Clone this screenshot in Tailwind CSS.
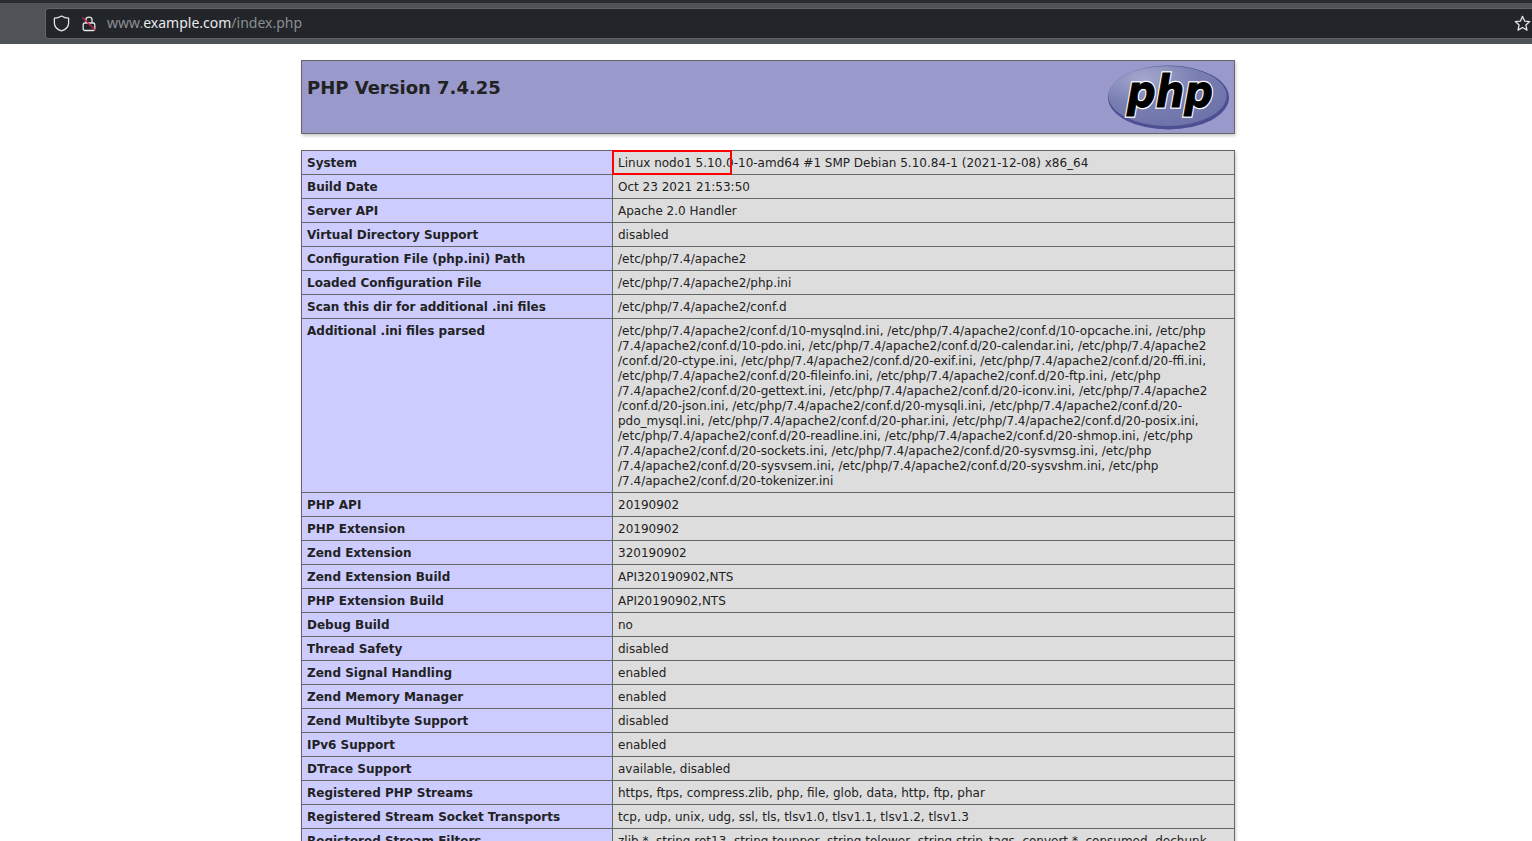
<!DOCTYPE html>
<html>
<head>
<title>phpinfo()</title>
<script src="https://cdn.jsdelivr.net/npm/@tailwindcss/browser@4"></script>
</head>
<body class="bg-white text-[#222] font-['DejaVu_Sans',sans-serif] h-[841px] overflow-hidden">
    <!-- browser toolbar -->
    <div class="h-[44px] bg-[#4f5256] border-t-[3px] border-[#2a2c2f] pt-[5px]">
        <div class="ml-[45px] h-[31px] bg-[#22262a] rounded-l-[3px] border border-[#5f6266] border-r-0 flex items-center">
            <svg class="ml-[7px]" width="17" height="17" viewBox="0 0 16 16" fill="none" stroke="#e4e5e6" stroke-width="1.2"><path d="M8 1 C10 2.3 12.5 3 14.7 3 V7.5 C14.7 11 11.8 13.8 8 15 C4.2 13.8 1.3 11 1.3 7.5 V3 C3.5 3 6 2.3 8 1 Z" stroke-linejoin="round"/></svg>
            <svg class="ml-[11px]" width="16" height="17" viewBox="0 0 16 17" fill="none" stroke="#e4e5e6" stroke-width="1.3"><path d="M5 8 V4.5 C5 1.2 11 1.2 11 4.5 V8"/><rect x="2.2" y="8" width="11.6" height="7.5" rx="1.5"/><path d="M1.5 2.5 L14.5 15.5" stroke="#d0264c" stroke-width="1.3"/></svg>
            <div class="ml-[10px] -mt-[1px] text-[14px] font-['Noto_Sans',sans-serif] text-[#8b8e92] leading-none">www.<span class="text-[#e8e9ea]">example.com</span>/index.php</div>
            <svg class="ml-auto mr-[1px]" width="17" height="17" viewBox="0 0 16 16" fill="none" stroke="#e4e5e6" stroke-width="1.2"><path d="M8 1.3 L10 5.7 L14.8 6.2 L11.2 9.4 L12.2 14.2 L8 11.7 L3.8 14.2 L4.8 9.4 L1.2 6.2 L6 5.7 Z" stroke-linejoin="round"/></svg>
        </div>
    </div>

    <div class="w-[934px] ml-[301px] mt-[16px]">
        <!-- php header -->
        <div class="relative h-[74px] bg-[#9999cc] border border-[#666] shadow-[1px_2px_3px_#ccc] px-[5px] pt-[4px]">
            <h1 class="text-[18px] font-bold leading-[45px] h-[45px]">PHP Version 7.4.25</h1>
            <svg class="absolute right-[5px] top-[4px] w-[121px] h-[65px]" width="121" height="65" viewBox="0 0 121 65">
                <defs>
                    <radialGradient id="logoFill" cx="0.3" cy="0.2" r="0.9">
                        <stop offset="0" stop-color="#a4a8cf"/>
                        <stop offset="0.5" stop-color="#7a7fb2"/>
                        <stop offset="1" stop-color="#6b70a8"/>
                    </radialGradient>
                    <text id="logoWord" x="19" y="42" font-family="DejaVu Sans" font-weight="700" font-style="italic" font-size="44" textLength="86" lengthAdjust="spacingAndGlyphs">php</text>
                </defs>
                <ellipse cx="60.5" cy="32.5" rx="60.5" ry="32" fill="#4c4f91"/>
                <ellipse cx="59.5" cy="31" rx="59" ry="30" fill="url(#logoFill)"/>
                <use href="#logoWord" fill="#fff" stroke="#fff" stroke-width="3.5"/>
                <use href="#logoWord" fill="#000" stroke="#000" stroke-width="1"/>
            </svg>
        </div>

        <!-- first info table -->
        <table class="w-[934px] mt-[16px] border-collapse table-fixed text-[12px] leading-[15px] shadow-[1px_2px_3px_#ccc]">
            <colgroup><col class="w-[311px]"><col></colgroup>
            <tbody id="rows">
                <tr><td class="bg-[#ccccff] border border-[#666] px-[5px] pt-[5px] pb-[3px] align-baseline font-bold">System</td><td class="bg-[#dddddd] border border-[#666] px-[5px] pt-[5px] pb-[3px] align-baseline break-words">Linux nodo1 5.10.0-10-amd64 #1 SMP Debian 5.10.84-1 (2021-12-08) x86_64</td></tr>
                <tr><td class="bg-[#ccccff] border border-[#666] px-[5px] pt-[5px] pb-[3px] align-baseline font-bold">Build Date</td><td class="bg-[#dddddd] border border-[#666] px-[5px] pt-[5px] pb-[3px] align-baseline break-words">Oct 23 2021 21:53:50</td></tr>
                <tr><td class="bg-[#ccccff] border border-[#666] px-[5px] pt-[5px] pb-[3px] align-baseline font-bold">Server API</td><td class="bg-[#dddddd] border border-[#666] px-[5px] pt-[5px] pb-[3px] align-baseline break-words">Apache 2.0 Handler</td></tr>
                <tr><td class="bg-[#ccccff] border border-[#666] px-[5px] pt-[5px] pb-[3px] align-baseline font-bold">Virtual Directory Support</td><td class="bg-[#dddddd] border border-[#666] px-[5px] pt-[5px] pb-[3px] align-baseline break-words">disabled</td></tr>
                <tr><td class="bg-[#ccccff] border border-[#666] px-[5px] pt-[5px] pb-[3px] align-baseline font-bold">Configuration File (php.ini) Path</td><td class="bg-[#dddddd] border border-[#666] px-[5px] pt-[5px] pb-[3px] align-baseline break-words">/etc/php/7.4/apache2</td></tr>
                <tr><td class="bg-[#ccccff] border border-[#666] px-[5px] pt-[5px] pb-[3px] align-baseline font-bold">Loaded Configuration File</td><td class="bg-[#dddddd] border border-[#666] px-[5px] pt-[5px] pb-[3px] align-baseline break-words">/etc/php/7.4/apache2/php.ini</td></tr>
                <tr><td class="bg-[#ccccff] border border-[#666] px-[5px] pt-[5px] pb-[3px] align-baseline font-bold">Scan this dir for additional .ini files</td><td class="bg-[#dddddd] border border-[#666] px-[5px] pt-[5px] pb-[3px] align-baseline break-words">/etc/php/7.4/apache2/conf.d</td></tr>
                <tr><td class="bg-[#ccccff] border border-[#666] px-[5px] pt-[5px] pb-[3px] align-baseline font-bold">Additional .ini files parsed</td><td class="bg-[#dddddd] border border-[#666] px-[5px] pt-[5px] pb-[3px] align-baseline break-words">/etc/php/7.4/apache2/conf.d/10-mysqlnd.ini, /etc/php/7.4/apache2/conf.d/10-opcache.ini, /etc/php<br>/7.4/apache2/conf.d/10-pdo.ini, /etc/php/7.4/apache2/conf.d/20-calendar.ini, /etc/php/7.4/apache2<br>/conf.d/20-ctype.ini, /etc/php/7.4/apache2/conf.d/20-exif.ini, /etc/php/7.4/apache2/conf.d/20-ffi.ini,<br>/etc/php/7.4/apache2/conf.d/20-fileinfo.ini, /etc/php/7.4/apache2/conf.d/20-ftp.ini, /etc/php<br>/7.4/apache2/conf.d/20-gettext.ini, /etc/php/7.4/apache2/conf.d/20-iconv.ini, /etc/php/7.4/apache2<br>/conf.d/20-json.ini, /etc/php/7.4/apache2/conf.d/20-mysqli.ini, /etc/php/7.4/apache2/conf.d/20-<br>pdo_mysql.ini, /etc/php/7.4/apache2/conf.d/20-phar.ini, /etc/php/7.4/apache2/conf.d/20-posix.ini,<br>/etc/php/7.4/apache2/conf.d/20-readline.ini, /etc/php/7.4/apache2/conf.d/20-shmop.ini, /etc/php<br>/7.4/apache2/conf.d/20-sockets.ini, /etc/php/7.4/apache2/conf.d/20-sysvmsg.ini, /etc/php<br>/7.4/apache2/conf.d/20-sysvsem.ini, /etc/php/7.4/apache2/conf.d/20-sysvshm.ini, /etc/php<br>/7.4/apache2/conf.d/20-tokenizer.ini</td></tr>
                <tr><td class="bg-[#ccccff] border border-[#666] px-[5px] pt-[5px] pb-[3px] align-baseline font-bold">PHP API</td><td class="bg-[#dddddd] border border-[#666] px-[5px] pt-[5px] pb-[3px] align-baseline break-words">20190902</td></tr>
                <tr><td class="bg-[#ccccff] border border-[#666] px-[5px] pt-[5px] pb-[3px] align-baseline font-bold">PHP Extension</td><td class="bg-[#dddddd] border border-[#666] px-[5px] pt-[5px] pb-[3px] align-baseline break-words">20190902</td></tr>
                <tr><td class="bg-[#ccccff] border border-[#666] px-[5px] pt-[5px] pb-[3px] align-baseline font-bold">Zend Extension</td><td class="bg-[#dddddd] border border-[#666] px-[5px] pt-[5px] pb-[3px] align-baseline break-words">320190902</td></tr>
                <tr><td class="bg-[#ccccff] border border-[#666] px-[5px] pt-[5px] pb-[3px] align-baseline font-bold">Zend Extension Build</td><td class="bg-[#dddddd] border border-[#666] px-[5px] pt-[5px] pb-[3px] align-baseline break-words">API320190902,NTS</td></tr>
                <tr><td class="bg-[#ccccff] border border-[#666] px-[5px] pt-[5px] pb-[3px] align-baseline font-bold">PHP Extension Build</td><td class="bg-[#dddddd] border border-[#666] px-[5px] pt-[5px] pb-[3px] align-baseline break-words">API20190902,NTS</td></tr>
                <tr><td class="bg-[#ccccff] border border-[#666] px-[5px] pt-[5px] pb-[3px] align-baseline font-bold">Debug Build</td><td class="bg-[#dddddd] border border-[#666] px-[5px] pt-[5px] pb-[3px] align-baseline break-words">no</td></tr>
                <tr><td class="bg-[#ccccff] border border-[#666] px-[5px] pt-[5px] pb-[3px] align-baseline font-bold">Thread Safety</td><td class="bg-[#dddddd] border border-[#666] px-[5px] pt-[5px] pb-[3px] align-baseline break-words">disabled</td></tr>
                <tr><td class="bg-[#ccccff] border border-[#666] px-[5px] pt-[5px] pb-[3px] align-baseline font-bold">Zend Signal Handling</td><td class="bg-[#dddddd] border border-[#666] px-[5px] pt-[5px] pb-[3px] align-baseline break-words">enabled</td></tr>
                <tr><td class="bg-[#ccccff] border border-[#666] px-[5px] pt-[5px] pb-[3px] align-baseline font-bold">Zend Memory Manager</td><td class="bg-[#dddddd] border border-[#666] px-[5px] pt-[5px] pb-[3px] align-baseline break-words">enabled</td></tr>
                <tr><td class="bg-[#ccccff] border border-[#666] px-[5px] pt-[5px] pb-[3px] align-baseline font-bold">Zend Multibyte Support</td><td class="bg-[#dddddd] border border-[#666] px-[5px] pt-[5px] pb-[3px] align-baseline break-words">disabled</td></tr>
                <tr><td class="bg-[#ccccff] border border-[#666] px-[5px] pt-[5px] pb-[3px] align-baseline font-bold">IPv6 Support</td><td class="bg-[#dddddd] border border-[#666] px-[5px] pt-[5px] pb-[3px] align-baseline break-words">enabled</td></tr>
                <tr><td class="bg-[#ccccff] border border-[#666] px-[5px] pt-[5px] pb-[3px] align-baseline font-bold">DTrace Support</td><td class="bg-[#dddddd] border border-[#666] px-[5px] pt-[5px] pb-[3px] align-baseline break-words">available, disabled</td></tr>
                <tr><td class="bg-[#ccccff] border border-[#666] px-[5px] pt-[5px] pb-[3px] align-baseline font-bold">Registered PHP Streams</td><td class="bg-[#dddddd] border border-[#666] px-[5px] pt-[5px] pb-[3px] align-baseline break-words">https, ftps, compress.zlib, php, file, glob, data, http, ftp, phar</td></tr>
                <tr><td class="bg-[#ccccff] border border-[#666] px-[5px] pt-[5px] pb-[3px] align-baseline font-bold">Registered Stream Socket Transports</td><td class="bg-[#dddddd] border border-[#666] px-[5px] pt-[5px] pb-[3px] align-baseline break-words">tcp, udp, unix, udg, ssl, tls, tlsv1.0, tlsv1.1, tlsv1.2, tlsv1.3</td></tr>
                <tr><td class="bg-[#ccccff] border border-[#666] px-[5px] pt-[5px] pb-[3px] align-baseline font-bold">Registered Stream Filters</td><td class="bg-[#dddddd] border border-[#666] px-[5px] pt-[5px] pb-[3px] align-baseline break-words">zlib.*, string.rot13, string.toupper, string.tolower, string.strip_tags, convert.*, consumed, dechunk</td></tr>
            </tbody>
        </table>
    </div>

    <!-- red highlight box added on the screenshot -->
    <div class="absolute left-[612px] top-[150px] w-[120px] h-[25px] border-2 border-[#ff0000]"></div>
</body>
</html>
